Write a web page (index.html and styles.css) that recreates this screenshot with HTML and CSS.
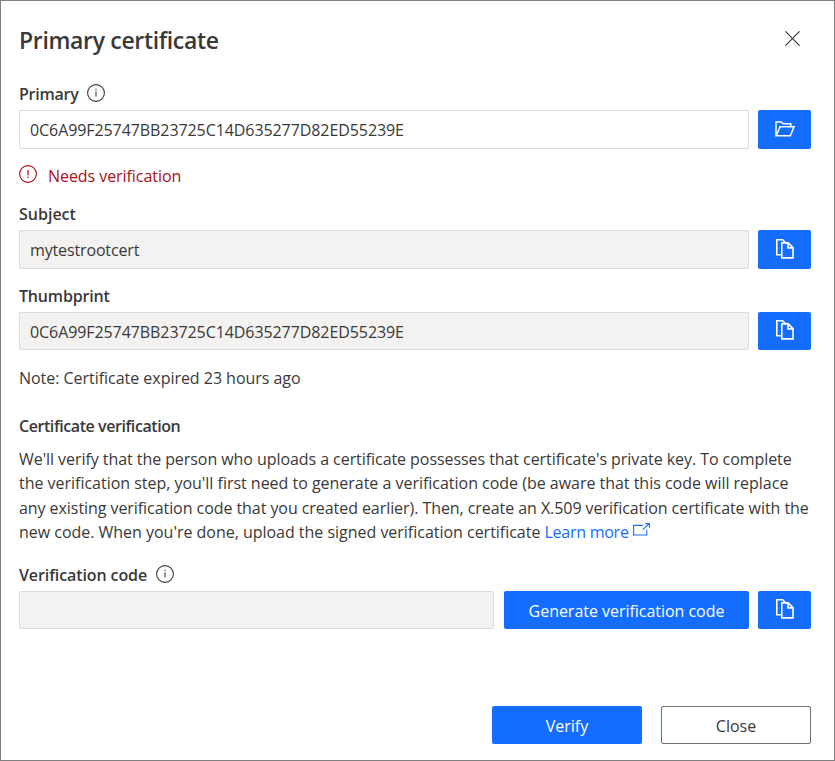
FILE: index.html
```html
<!DOCTYPE html>
<html lang="en">
<head>
<meta charset="utf-8">
<title>Primary certificate</title>
<link rel="stylesheet" href="styles.css">
</head>
<body>
<svg class="sprite" aria-hidden="true">
  <symbol id="info" viewBox="0 0 18 18"><circle cx="9" cy="9" r="8.4" fill="none" stroke="currentColor" stroke-width="1.1"/><path d="M9 7.3v5.2M9 4.8v1.2" stroke="currentColor" stroke-width="1.1" fill="none"/></symbol>
  <symbol id="warn" viewBox="0 0 18 18"><circle cx="9" cy="9" r="8.4" fill="none" stroke="currentColor" stroke-width="1.1"/><path d="M9 5v5.6M9 11.6v1.3" stroke="currentColor" stroke-width="1.2" fill="none"/></symbol>
  <symbol id="copy" viewBox="0 0 18 20"><path d="M5.8 15.8H.8V.8h5.8l2.9 2.9M5.8 3.9h6.4l4.8 4.8v10.2H5.8zM12 4v4.9h5" fill="none" stroke="currentColor" stroke-width="1.6"/></symbol>
  <symbol id="folder" viewBox="0 0 20 16"><path d="M1 14.8V.9h5.2l1.9 1.8h7.7v3M1.2 14.8 5 5.8h14l-3.6 9z" fill="none" stroke="currentColor" stroke-width="1.5"/></symbol>
</svg>
<main class="dialog">
  <header class="header">
    <h1 class="title">Primary certificate</h1>
    <svg class="dismiss" viewBox="0 0 14 14"><path d="M.3.3l13.4 13.4M13.7.3.3 13.7" stroke="currentColor" stroke-width="1.1"/></svg>
  </header>

  <div class="label"><span class="label-primary">Primary</span><svg class="hint"><use href="#info"/></svg></div>
  <div class="row">
    <div class="field field-edit hash">0C6A99F25747BB23725C14D635277D82ED55239E</div>
    <button class="btn icon-btn" aria-label="Browse"><svg class="folder"><use href="#folder"/></svg></button>
  </div>
  <div class="error"><svg class="hint"><use href="#warn"/></svg><span>Needs verification</span></div>

  <div class="label">Subject</div>
  <div class="row">
    <div class="field subject">mytestrootcert</div>
    <button class="btn icon-btn" aria-label="Copy"><svg class="copy"><use href="#copy"/></svg></button>
  </div>

  <div class="label label-thumb">Thumbprint</div>
  <div class="row row-short">
    <div class="field hash">0C6A99F25747BB23725C14D635277D82ED55239E</div>
    <button class="btn icon-btn" aria-label="Copy"><svg class="copy"><use href="#copy"/></svg></button>
  </div>
  <p class="note">Note: Certificate expired 23 hours ago</p>

  <h2 class="subhead">Certificate verification</h2>
  <p class="para"><span class="tight">We'll verify that the person who uploads a certificate possesses that certificate's private key. To complete</span><br>
  the verification step, you'll first need to generate a verification code (be aware that this code will replace<br>
  <span class="tight">any existing verification code that you created earlier). Then, create an X.509 verification certificate with the</span><br>
  new code. When you're done, upload the signed verification certificate <a class="link">Learn more</a><svg class="external" viewBox="0 0 17 13"><path d="M10 2.4H.6v9.6h13.2V6.7M9.8 6.7 16 .8M12.3.6h4.1v4.1" fill="none" stroke="currentColor" stroke-width="1.1"/></svg></p>

  <div class="label label-code"><span>Verification code</span><svg class="hint"><use href="#info"/></svg></div>
  <div class="row row-short">
    <div class="field field-code"></div>
    <button class="btn generate">Generate verification code</button>
    <button class="btn icon-btn" aria-label="Copy"><svg class="copy"><use href="#copy"/></svg></button>
  </div>

  <footer class="footer"><button class="btn action">Verify</button><button class="btn action secondary">Close</button></footer>
</main>
</body>
</html>
```
FILE: styles.css
```css
* { box-sizing: border-box; }
body { margin: 0; background: #fff; color: #3a3938; font: 16px/24px "Open Sans", "Noto Sans", sans-serif; }
.sprite { display: none; }
.dialog { width: 835px; height: 761px; border: 1px solid #7f7f7f; padding: 15px 23px 0 18px; display: flex; flex-direction: column; overflow: hidden; }
.header { display: flex; justify-content: space-between; align-items: center; height: 48px; flex: none; }
.title { margin: -1px 0 0; font-size: 23px; font-weight: 600; line-height: 32px; letter-spacing: -.33px; }
.dismiss { width: 15px; height: 15px; margin: -3px 11.5px 0 0; }
.label { display: flex; align-items: center; height: 24px; margin: 15px 0 4px; font-weight: 600; flex: none; }
.header + .label { margin-top: 18px; }
.label-primary { letter-spacing: -.25px; }
.label-thumb { letter-spacing: -.17px; }
.hint { width: 18px; height: 18px; margin: -2px 0 0 9px; }
.row { display: flex; gap: 9px; height: 39px; flex: none; }
.row-short { height: 38px; }
.field { flex: 1; border: 1px solid #dcdbda; border-radius: 2px; background: #f3f2f1; padding: 0 10px; display: flex; align-items: center; }
.field-edit { background: #fff; }
.hash { letter-spacing: -.08px; }
.subject { letter-spacing: -.14px; }
.row-short .hash { padding-top: 2px; }
.btn { border: 0; border-radius: 2px; background: #146dff; color: #fff; padding: 0; font: inherit; display: flex; align-items: center; justify-content: center; }
.icon-btn { width: 53px; }
.copy { width: 18px; height: 20px; margin-top: -2px; }
.row-short .copy { margin-top: -3px; }
.folder { width: 20px; height: 16px; margin-top: -1px; }
.error { display: flex; align-items: center; height: 24px; margin: 15px 0 -1px; color: #a80f18; letter-spacing: -.06px; flex: none; }
.error .hint { margin: -4px 11px 0 0; }
.note { margin: 16px 0 0; letter-spacing: -.03px; }
.subhead { margin: 24px 0 0; font-size: 16px; font-weight: 600; line-height: 24px; letter-spacing: -.43px; }
.para { margin: 9px 0 0; line-height: 24.3px; white-space: nowrap; letter-spacing: -.02px; }
.tight { letter-spacing: -.063px; }
.link { color: #146dff; letter-spacing: -.26px; }
.external { width: 17px; height: 13px; margin-left: 4px; color: #146dff; position: relative; top: -2px; }
.label-code { margin-top: 19px; letter-spacing: -.1px; }
.field-code { margin-right: 1px; }
.generate { width: 245px; padding-top: 2px; letter-spacing: -.03px; }
.footer { display: flex; justify-content: flex-end; gap: 19px; margin-top: 77px; flex: none; }
.action { width: 150px; height: 38px; padding-top: 2px; }
.secondary { background: #fff; color: #3a3938; border: 1px solid #717070; }
```
